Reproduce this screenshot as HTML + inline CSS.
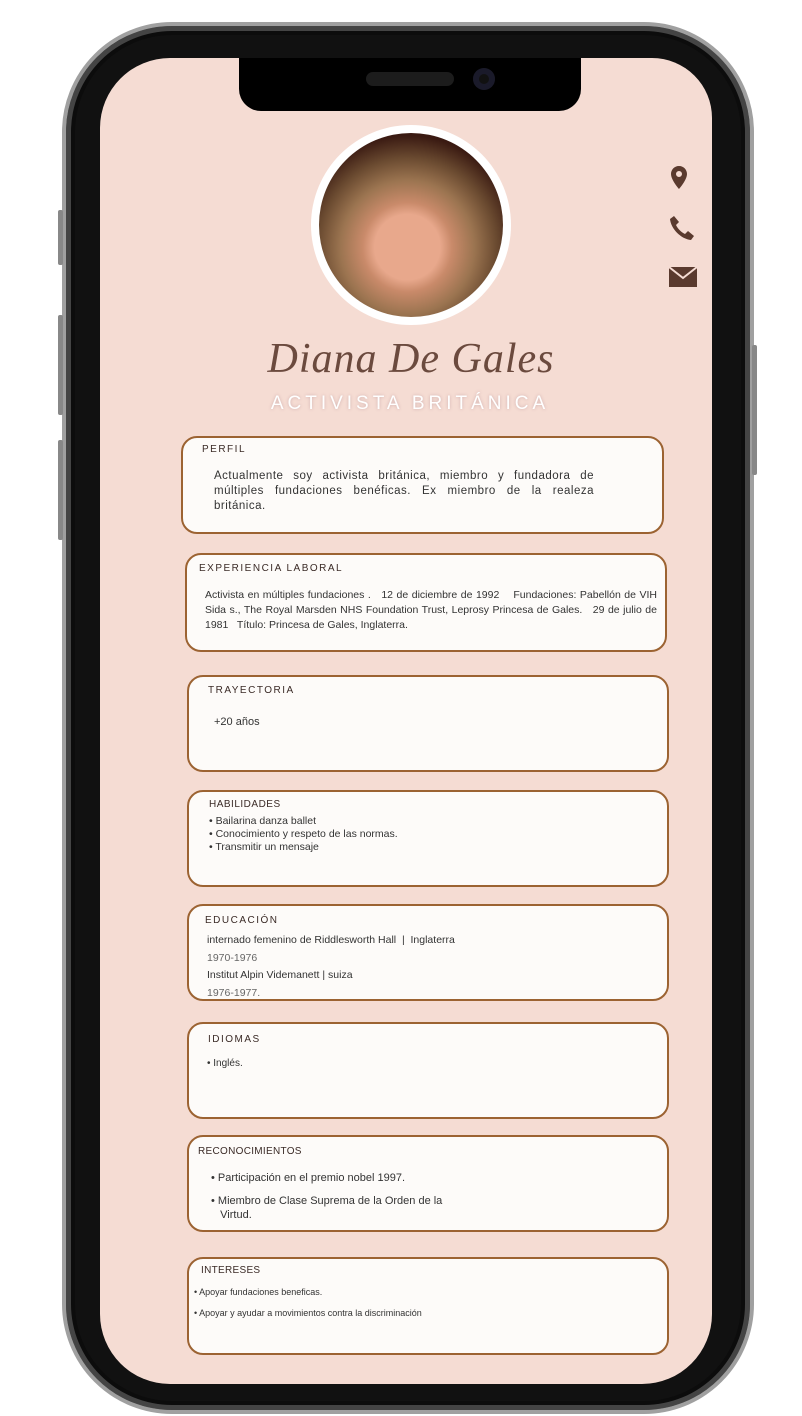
<!DOCTYPE html>
<html><head><meta charset="utf-8"><style>
*{margin:0;padding:0;box-sizing:border-box}
body{width:802px;height:1416px;background:#fff;position:relative;overflow:hidden;font-family:"Liberation Sans",sans-serif}
.frame{position:absolute;left:62px;top:22px;width:692px;height:1392px;border-radius:110px;background:#111;border:4px solid #a0a0a0;box-shadow:inset 0 0 0 5px #444,inset 0 0 0 9px #0c0c0c}
.btn{position:absolute;background:#888;border-radius:2px;width:5px}
.screen{position:absolute;left:100px;top:58px;width:612px;height:1326px;background:#f5dcd3;border-radius:70px 60px 70px 70px}
.notch{position:absolute;left:239px;top:58px;width:342px;height:53px;background:#000;border-radius:0 0 22px 22px}
.spk{position:absolute;left:366px;top:72px;width:88px;height:14px;background:#1c1c1c;border-radius:7px}
.cam{position:absolute;left:473px;top:68px;width:22px;height:22px;background:#111;border-radius:50%;box-shadow:inset 0 0 0 6px #1a1a2a}
.photo{position:absolute;left:311px;top:125px;width:200px;height:200px;border-radius:50%;background:#fff}
.photo div{position:absolute;left:8px;top:8px;width:184px;height:184px;border-radius:50%;background:radial-gradient(circle at 48% 62%,#e8a88c 0 22%,#c98a6a 30%,#9b7450 45%,#6a4a30 60%,#3a1a12 75%)}
.name{position:absolute;left:0;width:822px;top:335px;text-align:center;font-family:"Liberation Serif",serif;font-style:italic;font-size:42px;color:#6b4a3e;letter-spacing:1px}
.sub{position:absolute;left:0;width:820px;top:393px;text-align:center;font-size:19px;letter-spacing:4px;color:#fff;text-shadow:0 0 3px #caa}
.card{position:absolute;background:#fdfbf9;border:2px solid #9c6332;border-radius:16px;color:#333;font-size:11px}
.card h4{position:absolute;font-weight:normal;font-size:10px;letter-spacing:1.5px;color:#3a2a26}
.card p{position:absolute;line-height:15px}
.ic{position:absolute;left:668px}
</style></head><body>
<div class="frame"></div>
<div class="btn" style="left:58px;top:210px;height:55px"></div>
<div class="btn" style="left:58px;top:315px;height:100px"></div>
<div class="btn" style="left:58px;top:440px;height:100px"></div>
<div class="btn" style="left:752px;top:345px;height:130px"></div>
<div class="screen"></div>
<div class="notch"></div><div class="spk"></div><div class="cam"></div>
<div class="photo"><div></div></div>
<svg class="ic" style="top:165px" width="22" height="26" viewBox="0 0 22 26"><path d="M11 1C6 1 3 5 3 9c0 6 8 15 8 15s8-9 8-15c0-4-3-8-8-8zm0 11a3 3 0 1 1 0-6 3 3 0 0 1 0 6z" fill="#5a3a2e"/></svg>
<svg class="ic" style="top:214px" width="28" height="28" viewBox="0 0 28 28"><path d="M6 2l5 6-3 3c2 4 5 7 9 9l3-3 6 5-3 4C13 25 3 15 2 5z" fill="#5a3a2e"/></svg>
<svg class="ic" style="top:266px" width="30" height="22" viewBox="0 0 30 22"><path d="M1 1h28v20H1z" fill="#5a3a2e"/><path d="M1 1l14 11L29 1" fill="none" stroke="#f5dcd3" stroke-width="2"/></svg>
<div class="name">Diana De Gales</div>
<div class="sub">ACTIVISTA BRITÁNICA</div>

<div class="card" style="left:181px;top:436px;width:483px;height:98px"><h4 style="left:19px;top:6px">PERFIL</h4><p style="left:31px;top:31px;width:380px;text-align:justify;font-size:11.5px;letter-spacing:.5px">Actualmente soy activista británica, miembro y fundadora de múltiples fundaciones benéficas. Ex miembro de la realeza británica.</p></div>
<div class="card" style="left:185px;top:553px;width:482px;height:99px"><h4 style="left:12px;top:8px">EXPERIENCIA LABORAL</h4><p style="left:18px;top:33px;width:452px;text-align:justify;font-size:10.5px">Activista en múltiples fundaciones . &nbsp; 12 de diciembre de 1992 &nbsp;&nbsp; Fundaciones: Pabellón de VIH Sida s., The Royal Marsden NHS Foundation Trust, Leprosy Princesa de Gales. &nbsp; 29 de julio de 1981 &nbsp; Título: Princesa de Gales, Inglaterra.</p></div>
<div class="card" style="left:187px;top:675px;width:482px;height:97px"><h4 style="left:19px;top:8px">TRAYECTORIA</h4><p style="left:25px;top:38px">+20 años</p></div>
<div class="card" style="left:187px;top:790px;width:482px;height:97px"><h4 style="left:20px;top:7px;letter-spacing:.5px">HABILIDADES</h4><p style="left:20px;top:23px;line-height:13px;font-size:10.5px">• Bailarina danza ballet<br>• Conocimiento y respeto de las normas.<br>• Transmitir un mensaje</p></div>
<div class="card" style="left:187px;top:904px;width:482px;height:97px"><h4 style="left:16px;top:9px">EDUCACIÓN</h4><p style="left:18px;top:26px;line-height:17.5px;font-size:10.5px">internado femenino de Riddlesworth Hall &nbsp;| &nbsp;Inglaterra<br><span style="color:#666">1970-1976</span><br>Institut Alpin Videmanett | suiza<br><span style="color:#666">1976-1977.</span></p></div>
<div class="card" style="left:187px;top:1022px;width:482px;height:97px"><h4 style="left:19px;top:10px">IDIOMAS</h4><p style="left:18px;top:32px;font-size:10px">• Inglés.</p></div>
<div class="card" style="left:187px;top:1135px;width:482px;height:97px"><h4 style="left:9px;top:9px;letter-spacing:.3px">RECONOCIMIENTOS</h4><p style="left:22px;top:34px">• Participación en el premio nobel 1997.</p><p style="left:22px;top:57px;line-height:14px">• Miembro de Clase Suprema de la Orden de la<br>&nbsp;&nbsp;&nbsp;Virtud.</p></div>
<div class="card" style="left:187px;top:1257px;width:482px;height:98px"><h4 style="left:12px;top:6px;letter-spacing:.3px">INTERESES</h4><p style="left:5px;top:26px;font-size:9px">• Apoyar fundaciones beneficas.</p><p style="left:5px;top:47px;font-size:9px">• Apoyar y ayudar a movimientos contra la discriminación</p></div>
</body></html>
